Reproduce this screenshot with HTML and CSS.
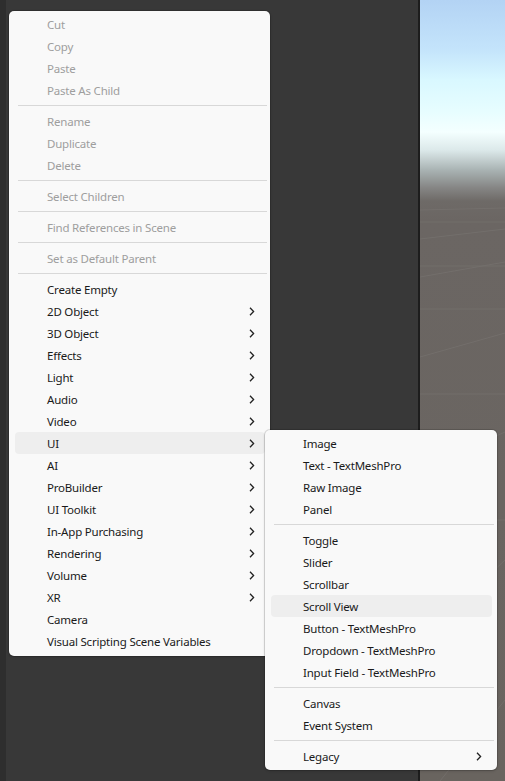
FILE: index.html
```html
<!DOCTYPE html>
<html>
<head>
<meta charset="utf-8">
<link rel="stylesheet" href="styles.css">
</head>
<body>
<div class="editor">
  <div class="edge"></div>
  <div class="panel"></div>
  <div class="divider"></div>
  <div class="scene">
    <svg class="grid" width="85" height="781" viewBox="0 0 85 781" preserveAspectRatio="none">
      <g stroke="#7a7673" stroke-width="1" fill="none">
        <line x1="0" y1="210" x2="85" y2="208"/>
        <line x1="0" y1="222" x2="85" y2="222"/>
        <line x1="0" y1="239" x2="85" y2="229"/>
        <line x1="0" y1="266" x2="85" y2="266"/>
        <line x1="0" y1="277" x2="85" y2="262"/>
        <line x1="0" y1="309" x2="85" y2="309"/>
        <line x1="0" y1="357" x2="85" y2="333"/>
        <line x1="0" y1="394" x2="85" y2="394"/>
        <line x1="0" y1="470" x2="85" y2="432"/>
        <line x1="0" y1="520" x2="85" y2="520"/>
        <line x1="20" y1="781" x2="85" y2="700"/>
        <line x1="0" y1="640" x2="85" y2="560"/>
      </g>
    </svg>
  </div>
</div>

<div class="menu main-menu">
  <div class="item disabled">Cut</div>
  <div class="item disabled">Copy</div>
  <div class="item disabled">Paste</div>
  <div class="item disabled">Paste As Child</div>
  <div class="sep"></div>
  <div class="item disabled">Rename</div>
  <div class="item disabled">Duplicate</div>
  <div class="item disabled">Delete</div>
  <div class="sep"></div>
  <div class="item disabled">Select Children</div>
  <div class="sep"></div>
  <div class="item disabled">Find References in Scene</div>
  <div class="sep"></div>
  <div class="item disabled">Set as Default Parent</div>
  <div class="sep"></div>
  <div class="item">Create Empty</div>
  <div class="item sub">2D Object<svg class="chev" width="6" height="9" viewBox="0 0 6 9"><polyline points="1,0.8 4.6,4.5 1,8.2"/></svg></div>
  <div class="item sub">3D Object<svg class="chev" width="6" height="9" viewBox="0 0 6 9"><polyline points="1,0.8 4.6,4.5 1,8.2"/></svg></div>
  <div class="item sub">Effects<svg class="chev" width="6" height="9" viewBox="0 0 6 9"><polyline points="1,0.8 4.6,4.5 1,8.2"/></svg></div>
  <div class="item sub">Light<svg class="chev" width="6" height="9" viewBox="0 0 6 9"><polyline points="1,0.8 4.6,4.5 1,8.2"/></svg></div>
  <div class="item sub">Audio<svg class="chev" width="6" height="9" viewBox="0 0 6 9"><polyline points="1,0.8 4.6,4.5 1,8.2"/></svg></div>
  <div class="item sub">Video<svg class="chev" width="6" height="9" viewBox="0 0 6 9"><polyline points="1,0.8 4.6,4.5 1,8.2"/></svg></div>
  <div class="item sub active">UI<svg class="chev" width="6" height="9" viewBox="0 0 6 9"><polyline points="1,0.8 4.6,4.5 1,8.2"/></svg></div>
  <div class="item sub">AI<svg class="chev" width="6" height="9" viewBox="0 0 6 9"><polyline points="1,0.8 4.6,4.5 1,8.2"/></svg></div>
  <div class="item sub">ProBuilder<svg class="chev" width="6" height="9" viewBox="0 0 6 9"><polyline points="1,0.8 4.6,4.5 1,8.2"/></svg></div>
  <div class="item sub">UI Toolkit<svg class="chev" width="6" height="9" viewBox="0 0 6 9"><polyline points="1,0.8 4.6,4.5 1,8.2"/></svg></div>
  <div class="item sub">In-App Purchasing<svg class="chev" width="6" height="9" viewBox="0 0 6 9"><polyline points="1,0.8 4.6,4.5 1,8.2"/></svg></div>
  <div class="item sub">Rendering<svg class="chev" width="6" height="9" viewBox="0 0 6 9"><polyline points="1,0.8 4.6,4.5 1,8.2"/></svg></div>
  <div class="item sub">Volume<svg class="chev" width="6" height="9" viewBox="0 0 6 9"><polyline points="1,0.8 4.6,4.5 1,8.2"/></svg></div>
  <div class="item sub">XR<svg class="chev" width="6" height="9" viewBox="0 0 6 9"><polyline points="1,0.8 4.6,4.5 1,8.2"/></svg></div>
  <div class="item">Camera</div>
  <div class="item">Visual Scripting Scene Variables</div>
</div>

<div class="menu sub-menu">
  <div class="item">Image</div>
  <div class="item">Text - TextMeshPro</div>
  <div class="item">Raw Image</div>
  <div class="item">Panel</div>
  <div class="sep"></div>
  <div class="item">Toggle</div>
  <div class="item">Slider</div>
  <div class="item">Scrollbar</div>
  <div class="item active">Scroll View</div>
  <div class="item">Button - TextMeshPro</div>
  <div class="item">Dropdown - TextMeshPro</div>
  <div class="item">Input Field - TextMeshPro</div>
  <div class="sep"></div>
  <div class="item">Canvas</div>
  <div class="item">Event System</div>
  <div class="sep"></div>
  <div class="item sub">Legacy<svg class="chev" width="6" height="9" viewBox="0 0 6 9"><polyline points="1,0.8 4.6,4.5 1,8.2"/></svg></div>
</div>
</body>
</html>
```

FILE: styles.css
```css
html, body {
  margin: 0;
  padding: 0;
  width: 505px;
  height: 781px;
  overflow: hidden;
  background: #383838;
  font-family: "Noto Sans", "Open Sans", sans-serif;
}

.editor {
  display: flex;
  width: 505px;
  height: 781px;
}

.edge {
  width: 6px;
  background: #2e2e2e;
}

.panel {
  flex: 1;
  background: #383838;
}

.divider {
  width: 2px;
  background: #1d1d1d;
}

.scene {
  width: 85px;
  position: relative;
  background: linear-gradient(to bottom,
    #b3d3f4 0px,
    #c4e4fb 50px,
    #d9f8ff 80px,
    #e6fdff 110px,
    #f4ffff 132px,
    #dce9ea 150px,
    #a9b3b3 170px,
    #858584 188px,
    #6e6a67 201px,
    #6b6663 220px,
    #69645f 781px);
}

.grid {
  position: absolute;
  left: 0;
  top: 0;
  opacity: 0.55;
}

.menu {
  position: absolute;
  background: #f9f9f9;
  border-radius: 5px;
  box-shadow: 0 0 0 1px rgba(0, 0, 0, 0.12), 0 1px 3px rgba(0, 0, 0, 0.18);
  display: flex;
  flex-direction: column;
  box-sizing: border-box;
}

.main-menu {
  left: 9px;
  top: 11px;
  width: 261px;
  padding: 2px 5px 4px 6px;
}

.sub-menu {
  left: 265px;
  top: 430px;
  width: 232px;
  padding: 2px 5px 3px 6px;
}

.item {
  height: 22px;
  display: flex;
  align-items: center;
  justify-content: space-between;
  padding: 0 10px 0 32px;
  font-size: 11.5px;
  letter-spacing: -0.2px;
  color: #1a1a1a;
  border-radius: 4px;
  white-space: nowrap;
}

.item.disabled {
  color: #9e9e9e;
}

.item.active {
  background: #eeeeee;
}

.sep {
  height: 1px;
  background: #d8d8d8;
  margin: 4px -2px 4px 3px;
}

.chev {
  display: block;
}

.chev polyline {
  fill: none;
  stroke: #222222;
  stroke-width: 1.3;
}
```
